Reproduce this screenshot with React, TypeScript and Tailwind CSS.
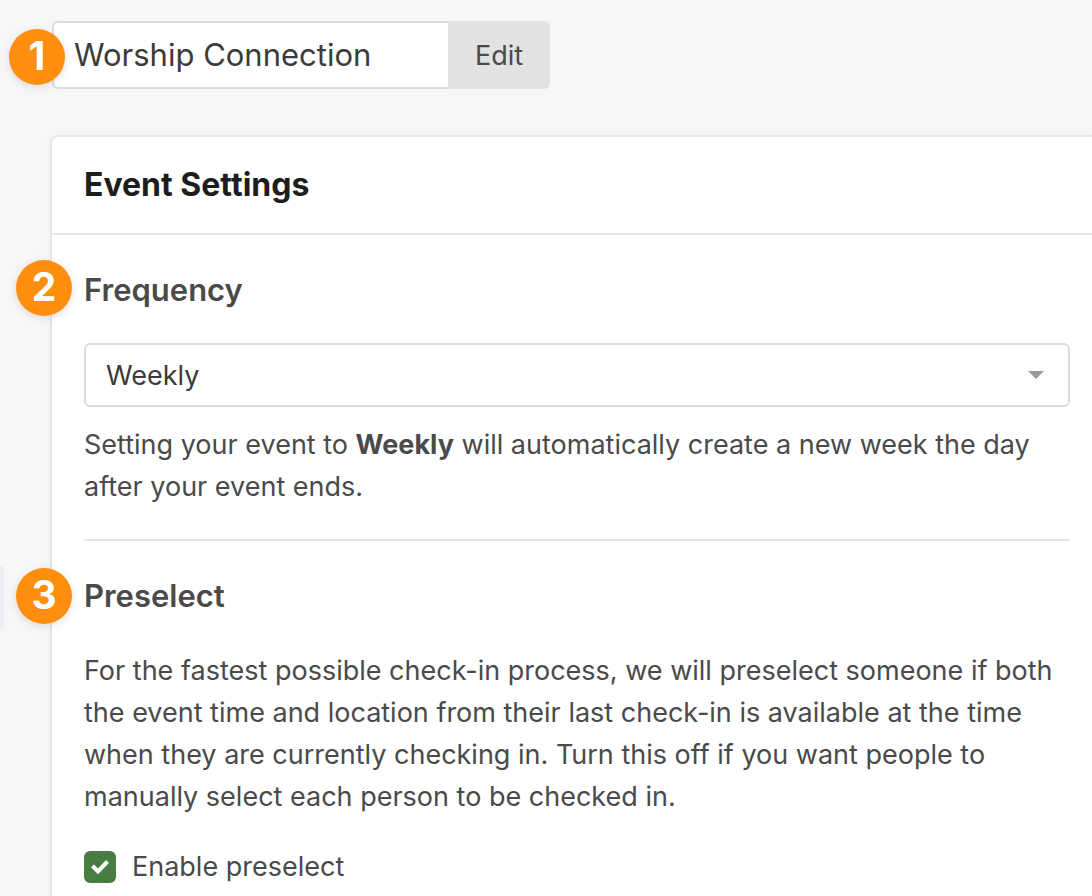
import { useState, type ReactNode } from "react"

function StepBadge({ className, children }: { className: string; children: ReactNode }) {
  return (
    <span
      className={`absolute flex h-14 w-14 items-center justify-center rounded-full bg-[#ff8d0e] pb-[3px] text-[39px] leading-none font-bold text-white shadow-[0_2px_8px_rgba(0,0,0,0.12)] ${className}`}
    >
      {children}
    </span>
  )
}

export default function App() {
  const [name, setName] = useState("Worship Connection")
  const [frequency, setFrequency] = useState("Weekly")
  const [preselect, setPreselect] = useState(true)

  return (
    <div className="relative flex min-h-screen flex-col overflow-hidden bg-[#f7f7f7] pt-[21px] pl-[50px] font-['Inter','Liberation_Sans',sans-serif] text-[27px] leading-[42px] text-[#4a4a4a]">
      {/* Edge of the collapsed side menu */}
      <div className="absolute top-[566px] left-0 h-[63px] w-1 rounded-r-md bg-[#efebf2]" />

      <form className="relative ml-[2px] flex h-[68px] w-[498px]" onSubmit={(e) => e.preventDefault()}>
        <input
          type="text"
          aria-label="Event name"
          value={name}
          onChange={(e) => setName(e.target.value)}
          className="min-w-0 flex-1 rounded-l-md border-2 border-r-0 border-[#dbdbdb] bg-white pl-5 text-[31px] text-[#3b3b3b] outline-none"
        />
        <button type="submit" className="w-[102px] rounded-r-md bg-[#e2e2e2] pt-[2px]">
          Edit
        </button>
        <StepBadge className="top-2 -left-[43px]">1</StepBadge>
      </form>

      <main className="mt-[46px] flex-1 rounded-tl-lg border-t-2 border-l-2 border-[#e6e6e6] bg-white shadow-[0_0_6px_rgba(0,0,0,0.03)]">
        <header className="border-b-2 border-[#e6e6e6] px-8 py-7">
          <h1 className="text-[32px] leading-10 font-bold text-[#1d1d1d]">Event Settings</h1>
        </header>

        <div className="pr-[22px] pl-8">
          <section className="border-b-2 border-[#e6e6e6] pt-[35px] pb-[31px]">
            <div className="relative">
              <StepBadge className="-top-[10px] -left-[68px]">2</StepBadge>
              <h2 className="text-[31px] leading-10 font-semibold">
                <label htmlFor="frequency">Frequency</label>
              </h2>
            </div>
            <div className="relative mt-[33px]">
              <select
                id="frequency"
                value={frequency}
                onChange={(e) => setFrequency(e.target.value)}
                className="block h-16 w-full appearance-none rounded-md border-2 border-[#dbdbdb] bg-white px-5 pt-[2px] text-[#3b3b3b] outline-none"
              >
                <option>Weekly</option>
                <option>Daily</option>
                <option>None</option>
              </select>
              <svg
                viewBox="0 0 16 8"
                className="pointer-events-none absolute top-7 right-[26px] h-2 w-4"
                aria-hidden="true"
              >
                <path d="M0 0h16L8 8z" fill="#9b9b9b" />
              </svg>
            </div>
            <p className="mt-[17px]">
              Setting your event to <strong className="font-bold">Weekly</strong> will automatically create a new week
              the day after your event ends.
            </p>
          </section>

          <section className="pt-[35px]">
            <div className="relative">
              <StepBadge className="-top-2 -left-[68px]">3</StepBadge>
              <h2 className="text-[31px] leading-10 font-semibold">Preselect</h2>
            </div>
            <p className="mt-[34px]">
              For the fastest possible check-in process, we will preselect someone if both the event time and location
              from their last check-in is available at the time when they are currently checking in. Turn this off if
              you want people to manually select each person to be checked in.
            </p>
            <label className="mt-7 flex items-center">
              <span className="relative mr-4 h-8 w-8">
                <input
                  type="checkbox"
                  checked={preselect}
                  onChange={(e) => setPreselect(e.target.checked)}
                  className="block h-8 w-8 appearance-none rounded-md border-2 border-[#dbdbdb] bg-white checked:border-[#487d43] checked:bg-[#487d43]"
                />
                {preselect && (
                  <svg
                    viewBox="0 0 32 32"
                    className="pointer-events-none absolute inset-0 h-8 w-8"
                    aria-hidden="true"
                  >
                    <path d="M8.5 15l5.5 5.5L23.5 10.5" fill="none" stroke="#fff" strokeWidth="4" />
                  </svg>
                )}
              </span>
              Enable preselect
            </label>
          </section>
        </div>
      </main>
    </div>
  )
}
